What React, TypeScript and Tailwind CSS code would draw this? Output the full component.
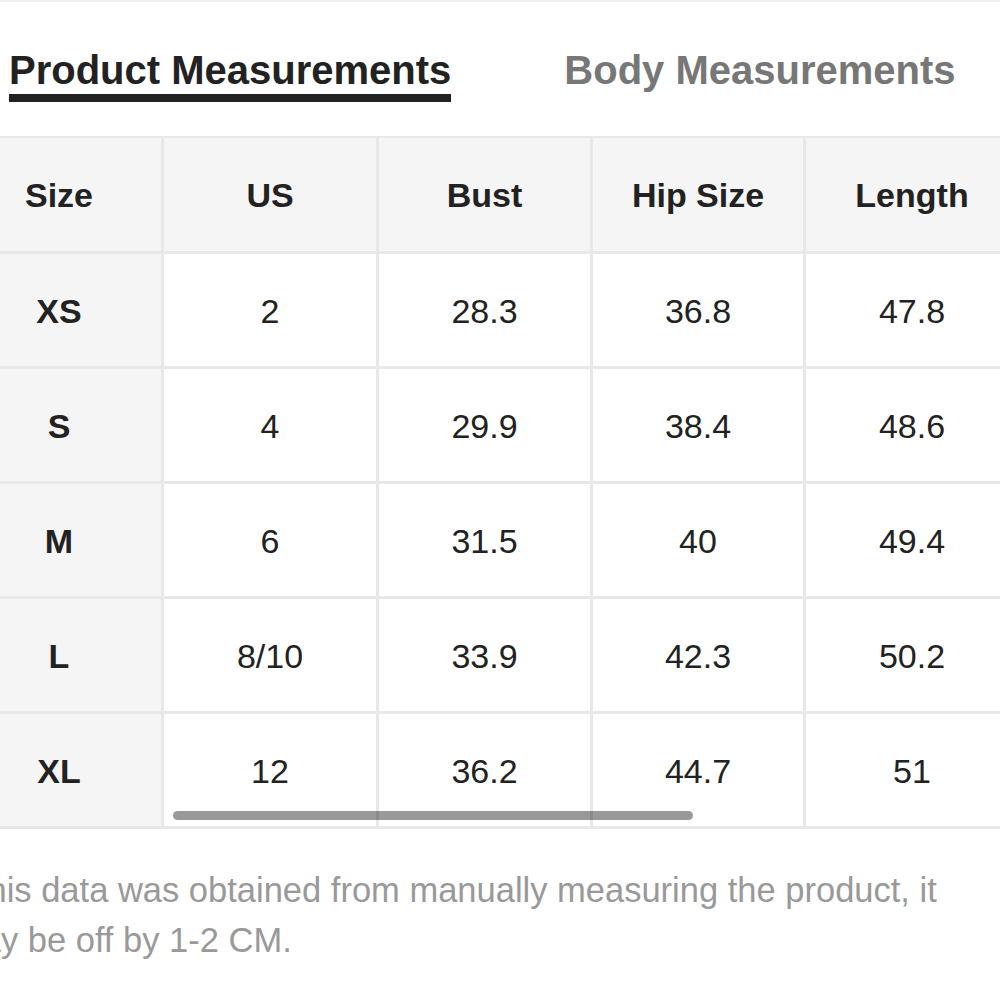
import React from 'react';

const columns = ['Size', 'US', 'Bust', 'Hip Size', 'Length'];
const widths = ['w-[207px]', 'w-[215px]', 'w-[214px]', 'w-[213px]', 'w-[215px]'];

const rows = [
  ['XS', '2', '28.3', '36.8', '47.8'],
  ['S', '4', '29.9', '38.4', '48.6'],
  ['M', '6', '31.5', '40', '49.4'],
  ['L', '8/10', '33.9', '42.3', '50.2'],
  ['XL', '12', '36.2', '44.7', '51'],
];

export default function App() {
  return (
    <div className="w-[1000px] h-[1000px] bg-white overflow-hidden font-['Liberation_Sans',Arial,sans-serif]">
      <div className="h-[2px] bg-[#efefef]" />

      {/* tabs */}
      <div className="flex gap-[113px] pl-[9px] pt-[48px]">
        <div className="flex flex-col">
          <span className="text-[40px] leading-[40px] font-bold text-[#222]">Product Measurements</span>
          <div className="mt-[4px] h-[8px] bg-[#222]" />
        </div>
        <div className="flex flex-col">
          <span className="text-[40px] leading-[40px] font-bold text-[#777]">Body Measurements</span>
        </div>
      </div>

      {/* table, scrolled a little to the right */}
      <div className="relative mt-[34px] overflow-hidden">
        <div className="-ml-[43px] w-max border-t-2 border-[#e8e8e8]">
          <div className="flex">
            {columns.map((c, i) => (
              <div
                key={c}
                className={`${widths[i]} h-[116px] pt-[2px] flex items-center justify-center bg-[#f5f5f5] border-r-[3px] border-b-[3px] border-[#e8e8e8] text-[34px] font-bold text-[#222]`}
              >
                {c}
              </div>
            ))}
          </div>
          {rows.map((r) => (
            <div key={r[0]} className="flex">
              {r.map((v, i) => (
                <div
                  key={i}
                  className={
                    i === 0
                      ? `${widths[i]} h-[115px] pt-[2px] flex items-center justify-center bg-[#f5f5f5] border-r-[3px] border-b-[3px] border-[#e8e8e8] text-[34px] font-bold text-[#222]`
                      : `${widths[i]} h-[115px] pt-[2px] flex items-center justify-center bg-white border-r-[3px] border-b-[3px] border-[#e8e8e8] text-[34px] text-[#222]`
                  }
                >
                  {v}
                </div>
              ))}
            </div>
          ))}
        </div>
        {/* horizontal scroll thumb */}
        <div className="absolute left-[173px] bottom-[9px] w-[520px] h-[9px] rounded-full bg-black/40" />
      </div>

      {/* note */}
      <div className="-ml-[47px] w-[1010px] mt-[36px] text-[34.5px] leading-[50px] text-[#999]">
        *This data was obtained from manually measuring the product, it may be off by 1-2 CM.
      </div>
    </div>
  );
}
